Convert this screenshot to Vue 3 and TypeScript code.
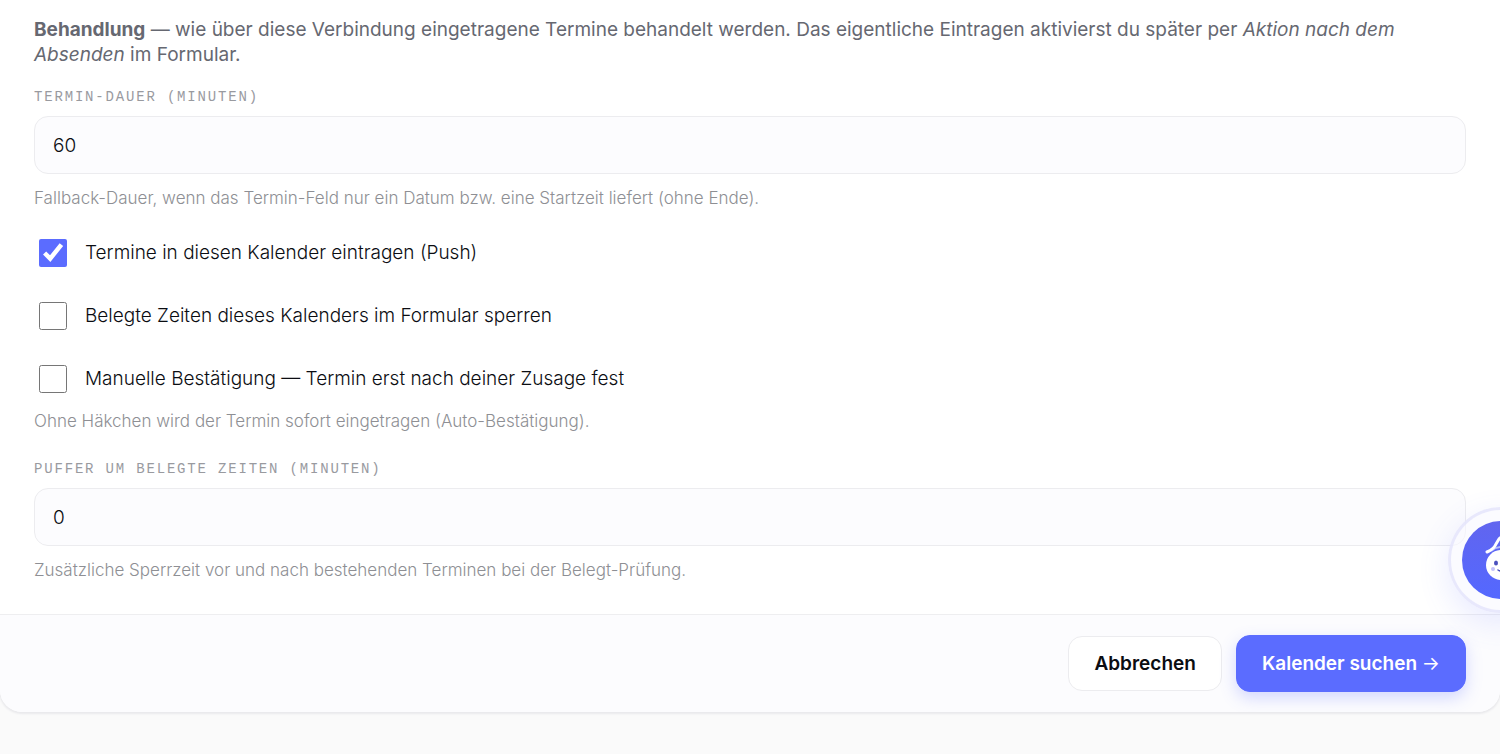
<script setup lang="ts">
import { ref } from 'vue'

interface Option {
  id: string
  label: string
  checked: boolean
}

const duration = ref('60')
const buffer = ref('0')
const options = ref<Option[]>([
  { id: 'push', label: 'Termine in diesen Kalender eintragen (Push)', checked: true },
  { id: 'block', label: 'Belegte Zeiten dieses Kalenders im Formular sperren', checked: false },
  { id: 'manual', label: 'Manuelle Bestätigung — Termin erst nach deiner Zusage fest', checked: false },
])
</script>

<template>
  <main class="page">
    <form class="card" @submit.prevent>
      <div class="body">
        <p class="intro">
          <strong>Behandlung</strong> — wie über diese Verbindung eingetragene Termine behandelt
          werden. Das eigentliche Eintragen aktivierst du später per
          <em>Aktion nach dem Absenden</em> im Formular.
        </p>

        <div class="field">
          <label class="caption" for="duration">Termin-Dauer (Minuten)</label>
          <input id="duration" v-model="duration" class="text" type="text" inputmode="numeric" />
          <p class="hint">
            Fallback-Dauer, wenn das Termin-Feld nur ein Datum bzw. eine Startzeit liefert (ohne Ende).
          </p>
        </div>

        <div class="options">
          <label v-for="o in options" :key="o.id" class="option" :for="o.id">
            <input :id="o.id" v-model="o.checked" class="tick" type="checkbox" />
            <span>{{ o.label }}</span>
          </label>
        </div>
        <p class="hint after-options">Ohne Häkchen wird der Termin sofort eingetragen (Auto-Bestätigung).</p>

        <div class="field">
          <label class="caption" for="buffer">Puffer um belegte Zeiten (Minuten)</label>
          <input id="buffer" v-model="buffer" class="text" type="text" inputmode="numeric" />
          <p class="hint">Zusätzliche Sperrzeit vor und nach bestehenden Terminen bei der Belegt-Prüfung.</p>
        </div>
      </div>

      <footer class="actions">
        <button class="btn cancel" type="button">Abbrechen</button>
        <button class="btn primary" type="submit">Kalender suchen <span class="arrow">→</span></button>
      </footer>
    </form>

    <button class="assistant" type="button" aria-label="Assistent">
      <svg viewBox="0 0 78 78" aria-hidden="true">
        <path d="M25 31Q32 28 34 23L37 18Q39 15 41 18L44 23Q46 28 53 31" fill="none" stroke="#fff" stroke-width="3" stroke-linecap="round" stroke-linejoin="round" />
        <path d="M29 30Q39 22 49 30" fill="none" stroke="#fff" stroke-width="2" stroke-opacity=".55" />
        <circle cx="39" cy="44" r="15" fill="#fff" />
        <ellipse cx="34" cy="42" rx="2" ry="2.500" fill="#4a50bd" />
        <ellipse cx="44" cy="42" rx="2" ry="2.500" fill="#4a50bd" />
        <circle cx="31" cy="48" r="2" fill="#c3c2fa" />
        <circle cx="47" cy="48" r="2" fill="#c3c2fa" />
        <path d="M36 49Q39 51 42 49" fill="none" stroke="#4a50bd" stroke-width="1.500" stroke-linecap="round" />
      </svg>
    </button>
  </main>
</template>

<style>
body {
  margin: 0;
  background: #fafafa;
  overflow-x: hidden;
}
</style>

<style scoped>
.page {
  position: relative;
  min-height: 100vh;
  overflow: hidden;
  background: #fafafa;
  color: #0b0d12;
  font-family: Inter, "Liberation Sans", sans-serif;
  font-size: 19px;
  font-weight: 350;
}

.card {
  background: #fff;
  border-radius: 0 0 22px 22px;
  box-shadow: 0 1px 2px 1px #e9e9ec;
  overflow: hidden;
}

.body {
  padding: 17px 34px 32px;
}

.intro {
  margin: 0 0 20px;
  line-height: 25px;
  font-weight: 400;
  color: #666871;
}

.intro strong {
  font-weight: 700;
}

.field {
  display: flex;
  flex-direction: column;
}

.caption {
  margin-bottom: 9px;
  font-family: "Liberation Mono", monospace;
  font-size: 14px;
  line-height: 20px;
  letter-spacing: 0.13em;
  text-transform: uppercase;
  color: #999a9f;
}

.text {
  box-sizing: border-box;
  width: 100%;
  height: 58px;
  padding: 0 18px;
  border: 1px solid #ececef;
  border-radius: 14px;
  background: #fcfcfe;
  color: inherit;
  font: inherit;
  outline: none;
}

.hint {
  margin: 12px 0 0;
  font-size: 17px;
  line-height: 24px;
  color: #8e8f94;
}

.options {
  display: flex;
  flex-direction: column;
  align-items: flex-start;
  gap: 35px;
  margin-top: 29px;
  padding-left: 5px;
}

.option {
  display: flex;
  align-items: center;
  gap: 18px;
  line-height: 28px;
}

.tick {
  flex: none;
  width: 28px;
  height: 28px;
  margin: 0;
  accent-color: #5b6cff;
}

.after-options {
  margin: 16px 0 26px;
}

.actions {
  display: flex;
  justify-content: flex-end;
  align-items: center;
  gap: 14px;
  padding: 20px 34px;
  border-top: 1px solid #eeeef0;
  background: #fcfcfe;
}

.btn {
  padding: 0 25px;
  border: 1px solid #ececef;
  border-radius: 14px;
  background: #fff;
  color: inherit;
  font: inherit;
  font-weight: 600;
  line-height: 53px;
}

.primary {
  border-color: #5b6cff;
  background: #5b6cff;
  color: #fff;
  line-height: 55px;
  box-shadow: 0 6px 16px rgb(91 108 255 / 25%);
}

.arrow {
  font-weight: 400;
}

.assistant {
  position: absolute;
  top: 507px;
  right: -54px;
  width: 106px;
  height: 106px;
  padding: 11px;
  border: 3px solid rgb(225 225 251 / 70%);
  border-radius: 50%;
  background: rgb(248 248 255 / 60%);
  box-shadow: 0 10px 32px rgb(91 108 255 / 14%);
}

.assistant svg {
  display: block;
  width: 78px;
  height: 78px;
  border-radius: 50%;
  background: linear-gradient(#6165ef, #5468ff);
}
</style>
